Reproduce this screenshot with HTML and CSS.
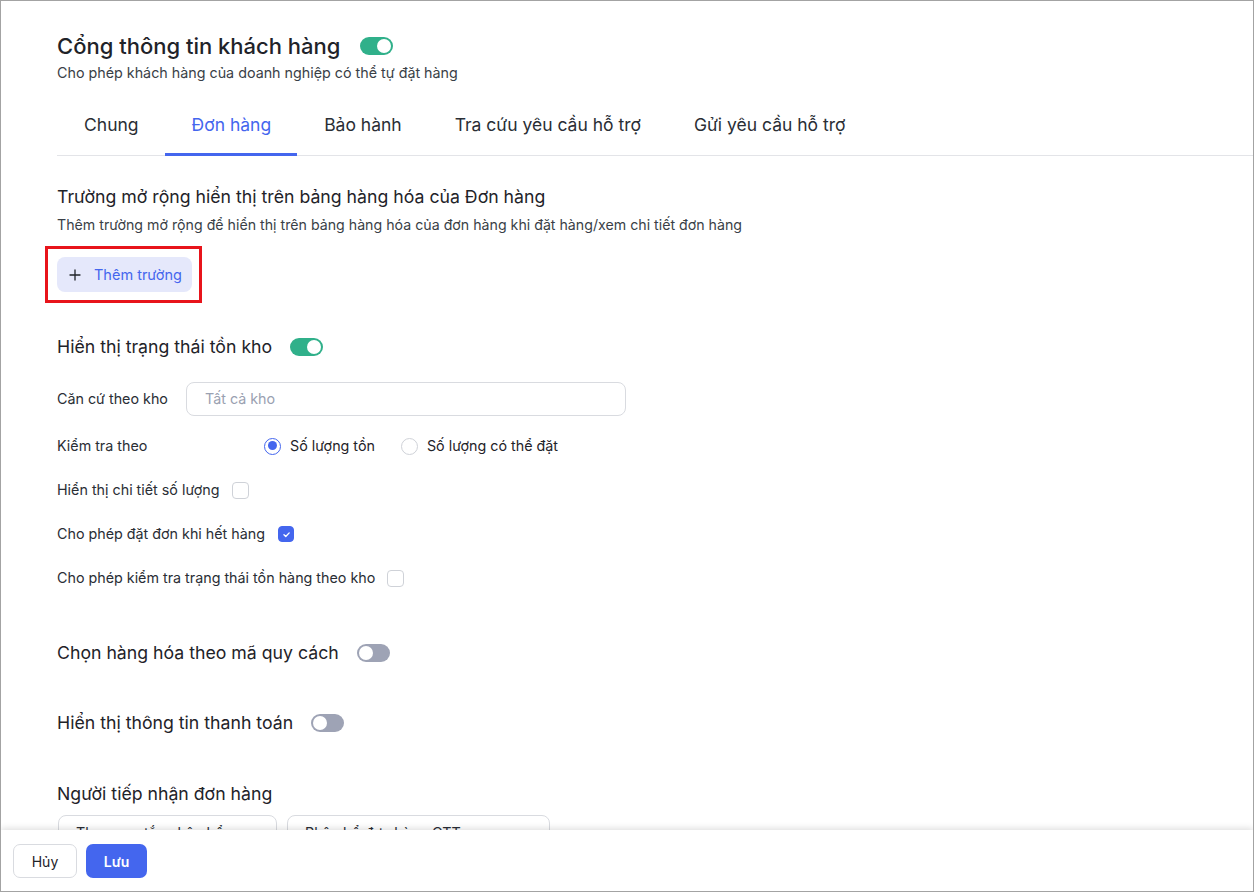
FILE: index.html
```html
<!DOCTYPE html>
<html lang="vi">
<head>
  <meta charset="UTF-8"/>
  <meta name="viewport" content="width=device-width,initial-scale=1.0"/>
  <title>Cổng thông tin khách hàng</title>
  <link rel="stylesheet" href="styles.css">
</head>
<body>
<div class="frame">
  <main class="content">
    <header class="page-head">
      <div class="title-row">
        <h1>Cổng thông tin khách hàng</h1>
        <span class="switch on"></span>
      </div>
      <p class="subtitle">Cho phép khách hàng của doanh nghiệp có thể tự đặt hàng</p>
    </header>

    <nav class="tabs">
      <a class="tab">Chung</a>
      <a class="tab active">Đơn hàng</a>
      <a class="tab">Bảo hành</a>
      <a class="tab">Tra cứu yêu cầu hỗ trợ</a>
      <a class="tab">Gửi yêu cầu hỗ trợ</a>
    </nav>

    <section class="block first">
      <h2>Trường mở rộng hiển thị trên bảng hàng hóa của Đơn hàng</h2>
      <p class="desc">Thêm trường mở rộng để hiển thị trên bảng hàng hóa của đơn hàng khi đặt hàng/xem chi tiết đơn hàng</p>
      <span class="marked">
        <button class="add-btn">
          <svg width="12" height="12" viewBox="0 0 12 12"><path d="M6 1v10M1 6h10" stroke="currentColor" stroke-width="1.3" stroke-linecap="round"/></svg>
          Thêm trường
        </button>
      </span>
    </section>

    <section class="block stock">
      <div class="head-row">
        <h2>Hiển thị trạng thái tồn kho</h2>
        <span class="switch on"></span>
      </div>

      <div class="row field-row">
        <label class="lbl">Căn cứ theo kho</label>
        <div class="input">Tất cả kho</div>
      </div>

      <div class="row">
        <label class="lbl lbl-radio">Kiểm tra theo</label>
        <span class="radio checked"></span><span class="opt">Số lượng tồn</span>
        <span class="radio"></span><span class="opt">Số lượng có thể đặt</span>
      </div>

      <div class="row check-row">
        <label class="lbl">Hiển thị chi tiết số lượng</label>
        <span class="check"></span>
      </div>

      <div class="row check-row">
        <label class="lbl">Cho phép đặt đơn khi hết hàng</label>
        <span class="check checked">
          <svg width="9" height="9" viewBox="0 0 10 10"><path d="M2.2 5.2l2 2 3.8-4" fill="none" stroke="#fff" stroke-width="1.5" stroke-linecap="round" stroke-linejoin="round"/></svg>
        </span>
      </div>

      <div class="row check-row">
        <label class="lbl">Cho phép kiểm tra trạng thái tồn hàng theo kho</label>
        <span class="check"></span>
      </div>
    </section>

    <section class="block toggle-block">
      <div class="head-row">
        <h2>Chọn hàng hóa theo mã quy cách</h2>
        <span class="switch"></span>
      </div>
    </section>

    <section class="block toggle-block">
      <div class="head-row">
        <h2>Hiển thị thông tin thanh toán</h2>
        <span class="switch"></span>
      </div>
    </section>

    <section class="block toggle-block">
      <h2>Người tiếp nhận đơn hàng</h2>
      <div class="selects">
        <div class="select s1">Theo quy tắc phân bổ <i class="chev"></i></div>
        <div class="select s2">Phân bổ đơn hàng CTT <i class="chev"></i></div>
      </div>
    </section>
  </main>

  <footer class="footer">
    <button class="btn btn-ghost">Hủy</button>
    <button class="btn btn-primary">Lưu</button>
  </footer>
</div>
</body>
</html>
```

FILE: styles.css
```css
:root{--text:#1f2329;--muted:#3a3f47;--blue:#4466ee;--green:#30b08a;--line:#e3e4e8;--border:#d9dbe0}
*{box-sizing:border-box;font-family:Inter,"Noto Sans",sans-serif;color:var(--text)}
html,body{margin:0;padding:0;background:#fff}
.frame{width:1254px;height:892px;border:1px solid #a3a3a3;display:flex;flex-direction:column;overflow:hidden}
.content{flex:1;overflow:hidden;padding:31px 0 0 56px}

/* header */
.title-row{display:flex;align-items:center;gap:20px}
h1{margin:0;font-size:22px;font-weight:500;line-height:28px}
.subtitle{margin:3px 0 0;font-size:14.3px;line-height:20px;color:var(--muted)}

/* switches */
.switch{position:relative;display:inline-block;width:33px;height:18px;border-radius:9px;background:#9ea3b5;flex:none}
.switch::after{content:"";position:absolute;top:2px;left:2px;width:14px;height:14px;border-radius:50%;background:#fff}
.switch.on{background:var(--green)}
.switch.on::after{left:17px}

/* tabs */
.tabs{display:flex;margin-top:10px;border-bottom:1px solid var(--line)}
.tab{display:block;padding:20px 26px 16px 27px;font-size:17.5px;line-height:24px;border-bottom:3px solid transparent;margin-bottom:-1px;color:#2a2e35;cursor:pointer}
.tab.active{color:var(--blue);border-bottom-color:var(--blue)}

/* sections */
.block h2{margin:0;font-size:17.7px;font-weight:400;line-height:24px}
.block.first{margin-top:29px}
.desc{margin:6px 0 0;font-size:14.2px;line-height:20px;color:var(--muted)}
.marked{display:inline-flex;margin:11px 0 0 -12px;padding:8px 7px 8px 9px;border:3px solid #e8141b}
.add-btn{display:flex;align-items:center;gap:13px;height:35px;padding:0 10px 0 12px;border:none;border-radius:8px;background:#e5e8fb;color:var(--blue);font-size:14.5px;font-weight:400;cursor:pointer}
.add-btn svg{color:var(--blue)}

.head-row{display:flex;align-items:center;gap:18px}
.stock{margin-top:32px}
.row{display:flex;align-items:center;font-size:14.3px;line-height:20px}
.field-row{margin-top:23px}
.row + .row{margin-top:20px}
.row.check-row{margin-top:24px}
.lbl{color:#2a2e35}
.field-row .lbl{width:129px}
.input{width:440px;height:34px;border:1px solid var(--border);border-radius:8px;padding:0 18px;display:flex;align-items:center;color:#9aa1b1;font-size:14.3px}
.lbl-radio{width:207px}
.radio{width:17px;height:17px;border-radius:50%;border:1.5px solid #cfd2d8;margin-right:9px;position:relative;flex:none}
.radio.checked{border-color:var(--blue)}
.radio.checked::after{content:"";position:absolute;top:2.5px;left:2.5px;width:9px;height:9px;border-radius:50%;background:var(--blue)}
.opt{margin-right:26px;font-size:14.3px}
.check{width:17px;height:17px;border:1px solid #cfd2d8;border-radius:4px;margin-left:12px;display:flex;align-items:center;justify-content:center;flex:none}
.check.checked{background:var(--blue);border-color:var(--blue);width:16px;height:16px;margin-left:13px}

.toggle-block{margin-top:53px}
.toggle-block + .toggle-block{margin-top:46px}
.toggle-block:last-child{margin-top:47px}
.selects{display:flex;gap:10px;margin-top:9px;margin-left:1px}
.select{position:relative;display:flex;align-items:center;height:34px;border:1px solid var(--border);border-radius:8px;padding:0 17px;font-size:14.3px;color:#2a2e35}
.s1{width:219px}
.s2{width:263px}
.chev{position:absolute;right:14px;top:12px;width:7px;height:7px;border-right:1.5px solid #777;border-bottom:1.5px solid #777;transform:rotate(45deg)}

/* footer */
.footer{position:relative;display:flex;gap:9px;height:61px;padding:14px 12px;background:#fff;box-shadow:0 -2px 6px rgba(0,0,0,.12)}
.btn{height:34px;border-radius:7px;font-size:14px;cursor:pointer}
.btn-ghost{width:64px;border:1px solid var(--border);background:#fff}
.btn-primary{width:61px;border:none;background:var(--blue);color:#fff;font-weight:600}
```
